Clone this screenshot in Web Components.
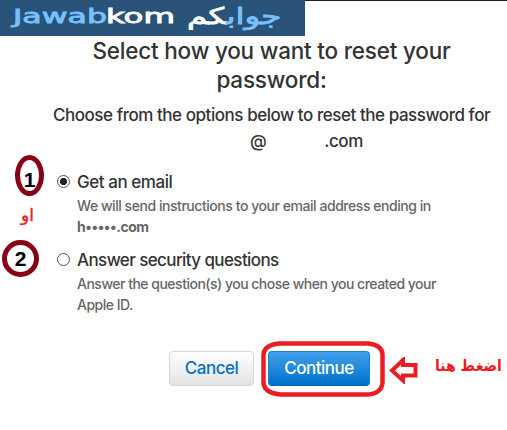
<!DOCTYPE html>
<html lang="en">
<head>
<meta charset="utf-8">
<title>Reset password</title>
<style>
    body {
        margin: 0;
        width: 507px;
        height: 430px;
        overflow: hidden;
        background: #fff;
        color: #333;
        font-family: Inter, "Liberation Sans", sans-serif;
    }
</style>
</head>
<body>
<reset-page>
    <site-banner slot="banner"></site-banner>
    <page-intro slot="intro">
        <span slot="title">Select how you want to reset your<br>password:</span>
        <span slot="text">Choose from the options below to reset the password for</span>
        <span slot="user">@</span>
        <span slot="domain">.com</span>
    </page-intro>
    <reset-option slot="options" checked>
        <step-mark slot="mark" class="first">1</step-mark>
        <span slot="note" lang="ar" dir="rtl">او</span>
        <span slot="title">Get an email</span>
        <span>We will send instructions to your email address ending in<br><b>h•••••.com</b></span>
    </reset-option>
    <reset-option slot="options" class="second">
        <step-mark slot="mark" class="second">2</step-mark>
        <span slot="title">Answer security questions</span>
        <span>Answer the question(s) you chose when you created your<br>Apple ID.</span>
    </reset-option>
    <action-button slot="actions">Cancel</action-button>
    <action-button slot="actions" primary>Continue</action-button>
    <click-hint slot="actions"><span lang="ar" dir="rtl">اضغط هنا</span></click-hint>
</reset-page>

<script>
class ResetPage extends HTMLElement {
  constructor() {
    super();
    this.attachShadow({mode: 'open'});
    this.shadowRoot.innerHTML = `
      <style>
        :host { display: block; }
        .options {
            display: flex;
            flex-direction: column;
        }
        .actions {
            display: flex;
            align-items: center;
            margin: 31px 0 0 169px;
            gap: 14px;
            height: 55px;
        }
      </style>
      <slot name="banner"></slot>
      <slot name="intro"></slot>
      <div class="options"><slot name="options"></slot></div>
      <div class="actions"><slot name="actions"></slot></div>
    `;
  }
}

class SiteBanner extends HTMLElement {
  constructor() {
    super();
    this.attachShadow({mode: 'open'});
    this.shadowRoot.innerHTML = `
      <style>
        :host {
            display: flex;
            height: 36px;
        }
        .logo {
            display: flex;
            width: 305px;
            background: #295378;
            color: #fff;
        }
        .line {
            flex: 1;
            height: 1px;
            background: #231f20;
        }
        svg { display: block; }
        text {
            font-family: "DejaVu Sans", sans-serif;
            fill: #fff;
            stroke: #fff;
            stroke-width: 0.8px;
        }
        .latin { font-size: 19px; }
        .blue { fill: #78c0ff; stroke: #78c0ff; color: #78c0ff; }
        .arabic {
            font: 23px/33px "DejaVu Sans", sans-serif;
            -webkit-text-stroke: 0.8px currentColor;
            white-space: nowrap;
            transform-origin: 0 50%;
            transform: scaleX(1.41);
            margin-left: 7px;
        }
      </style>
      <div class="logo">
        <svg width="180" height="36" viewBox="0 0 180 36">
          <text class="latin blue" x="13" y="23" textLength="94" lengthAdjust="spacingAndGlyphs">Jawab</text>
          <text class="latin" x="106" y="23" textLength="69" lengthAdjust="spacingAndGlyphs">kom</text>
        </svg>
        <div class="arabic" lang="ar" dir="rtl"><span class="blue">جواب</span>كم</div>
      </div>
      <div class="line"></div>
    `;
  }
}

class PageIntro extends HTMLElement {
  constructor() {
    super();
    this.attachShadow({mode: 'open'});
    this.shadowRoot.innerHTML = `
      <style>
        :host {
            display: block;
            padding-left: 36px;
            text-align: center;
            white-space: nowrap;
        }
        h1 {
            margin: 0;
            font-size: 22.5px;
            line-height: 29px;
            font-weight: 500;
            letter-spacing: -0.2px;
        }
        p {
            margin: 8px 0 0;
            font-size: 17px;
            line-height: 26px;
            font-weight: 450;
            letter-spacing: -0.45px;
        }
        .address {
            display: flex;
            margin: 0 0 0 214px;
            gap: 58px;
        }
        .domain { font-weight: 500; }
      </style>
      <h1><slot name="title"></slot></h1>
      <p><slot name="text"></slot></p>
      <p class="address">
        <slot name="user"></slot>
        <span class="domain"><slot name="domain"></slot></span>
      </p>
    `;
  }
}

class ResetOption extends HTMLElement {
  constructor() {
    super();
    this.attachShadow({mode: 'open'});
    this.shadowRoot.innerHTML = `
      <style>
        :host {
            display: grid;
            grid-template-columns: 57px 20px 1fr;
            height: 78px;
            white-space: nowrap;
        }
        .side {
            display: flex;
            flex-direction: column;
        }
        .note {
            margin: 7px 0 0 21px;
            color: #ed1c24;
            font: 17px/24px "DejaVu Sans", sans-serif;
            -webkit-text-stroke: 0.4px currentColor;
        }
        .radio {
            box-sizing: border-box;
            width: 13px;
            height: 13px;
            margin-top: 21px;
            border: 1px solid #555;
            border-radius: 50%;
            background: #fff;
        }
        :host([checked]) .radio {
            background: radial-gradient(circle, #222 3.2px, #fff 4px);
        }
        h2 {
            margin: 17px 0 0;
            font-size: 17px;
            line-height: 22px;
            font-weight: 450;
            letter-spacing: -0.45px;
        }
        :host(.second) h2 { letter-spacing: -0.6px; }
        .text {
            margin-top: 2px;
            font-size: 14px;
            line-height: 21px;
            font-weight: 450;
            letter-spacing: -0.45px;
            color: #666;
        }
        :host(.second) .text { letter-spacing: -0.5px; }
      </style>
      <div class="side">
        <slot name="mark"></slot>
        <div class="note"><slot name="note"></slot></div>
      </div>
      <div class="radio"></div>
      <div>
        <h2><slot name="title"></slot></h2>
        <div class="text"><slot></slot></div>
      </div>
    `;
  }
}

class StepMark extends HTMLElement {
  constructor() {
    super();
    this.attachShadow({mode: 'open'});
    this.shadowRoot.innerHTML = `
      <style>
        :host {
            box-sizing: border-box;
            display: flex;
            justify-content: center;
            align-items: center;
            border: 5px solid #880015;
            border-radius: 50%;
            color: #000;
            font: bold 21px/20px "Liberation Sans", sans-serif;
        }
        :host(.first) {
            width: 29px;
            height: 41px;
            margin: 1px 0 0 15px;
            padding-top: 8px;
        }
        :host(.second) {
            width: 37px;
            height: 37px;
            margin: 8px 0 0 2px;
        }
      </style>
      <slot></slot>
    `;
  }
}

class ActionButton extends HTMLElement {
  constructor() {
    super();
    this.attachShadow({mode: 'open'});
    this.shadowRoot.innerHTML = `
      <style>
        :host {
            display: block;
            position: relative;
        }
        button {
            display: block;
            box-sizing: border-box;
            width: 85px;
            height: 35px;
            padding: 0;
            border: 1px solid #d6d6d6;
            border-radius: 4px;
            background: linear-gradient(#fff, #e3e3e3);
            color: #0070c9;
            font: 450 17px/33px Inter, "Liberation Sans", sans-serif;
            letter-spacing: -0.5px;
        }
        .ring { display: none; }
        :host([primary]) button {
            width: 102px;
            border-color: #1482d0 #1482d0 #0067b8;
            background: linear-gradient(#42a1ec, #0070c9);
            color: #fff;
        }
        /* hand-drawn frame over the main button */
        :host([primary]) .ring {
            display: block;
            position: absolute;
            left: -7px;
            top: -10px;
        }
      </style>
      <button><slot></slot></button>
      <svg class="ring" width="124" height="56" viewBox="0 0 124 56">
        <path d="M18 2.5H107Q121.500 4 121.500 14V42Q120 53.500 105 53.500H20Q2.500 52 2.500 41V14Q3 4 18 2.500Z" fill="none" stroke="#ed1c24" stroke-width="4.500"/>
      </svg>
    `;
  }
}

class ClickHint extends HTMLElement {
  constructor() {
    super();
    this.attachShadow({mode: 'open'});
    this.shadowRoot.innerHTML = `
      <style>
        :host {
            display: flex;
            align-items: center;
            margin-left: 5px;
            gap: 17px;
            color: #ed1c24;
            font: bold 15.6px/24px "DejaVu Sans Condensed", "DejaVu Sans", sans-serif;
            white-space: nowrap;
        }
        svg { margin-top: 3px; }
        slot {
            display: block;
            margin-top: -5px;
        }
      </style>
      <svg width="29" height="27" viewBox="0 0 29 27">
        <path d="M3 13.500 L14 3 V8 H26.500 V18.500 H14 V23.500 Z" fill="none" stroke="#ed1c24" stroke-width="4"/>
      </svg>
      <slot></slot>
    `;
  }
}

customElements.define('reset-page', ResetPage);
customElements.define('site-banner', SiteBanner);
customElements.define('page-intro', PageIntro);
customElements.define('reset-option', ResetOption);
customElements.define('step-mark', StepMark);
customElements.define('action-button', ActionButton);
customElements.define('click-hint', ClickHint);
</script>
</body>
</html>
